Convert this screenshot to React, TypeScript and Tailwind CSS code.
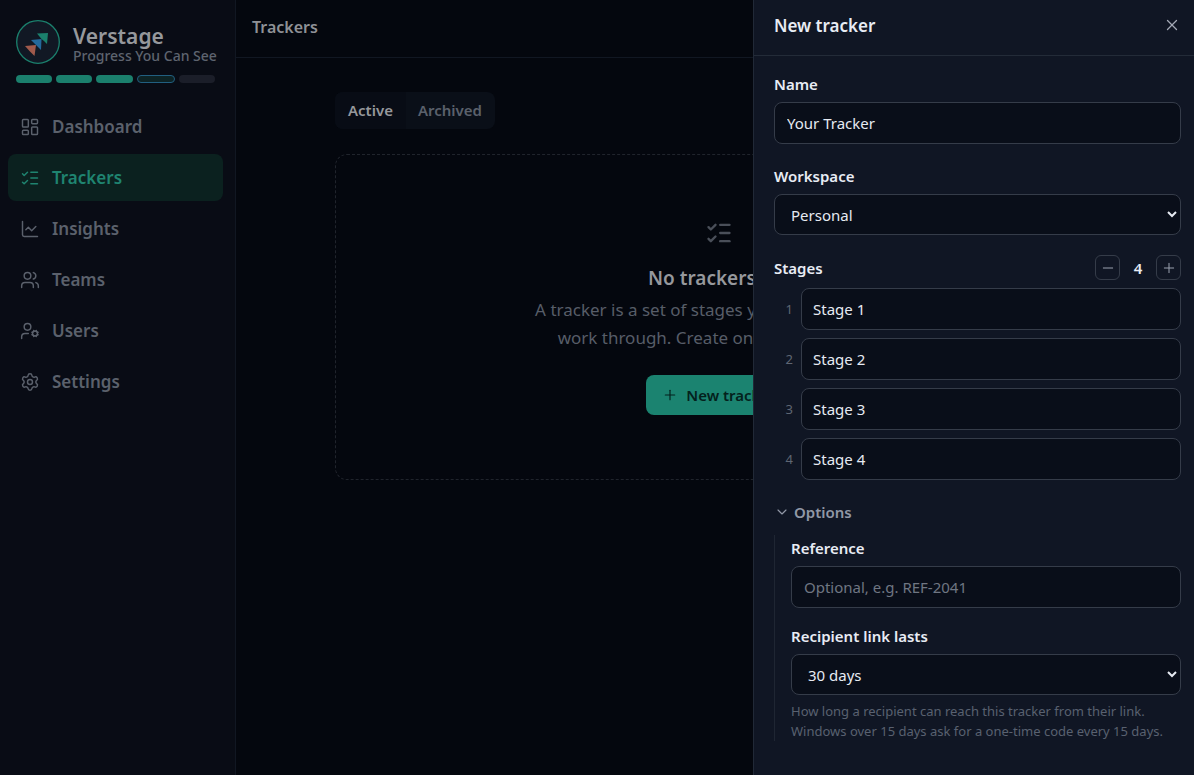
import { useState } from "react";
import {
  ChartLine,
  ChevronDown,
  LayoutDashboard,
  ListChecks,
  Minus,
  Plus,
  Settings,
  UserCog,
  Users,
  X,
} from "lucide-react";

const navItems = [
  { label: "Dashboard", icon: LayoutDashboard },
  { label: "Trackers", icon: ListChecks, active: true },
  { label: "Insights", icon: ChartLine },
  { label: "Teams", icon: Users },
  { label: "Users", icon: UserCog },
  { label: "Settings", icon: Settings },
];

const fieldClass =
  "block w-full rounded-lg border border-[#353c49] bg-[#090e19] text-[15px] text-[#e6eaf2] outline-none placeholder:text-[#6f7682]";
const labelClass = "block text-[15px] leading-5 font-semibold text-[#e8ecf4]";
const stepClass =
  "flex size-[25px] items-center justify-center rounded-md border border-[#353c49] text-[#9aa1af]";

function Logo() {
  return (
    <svg viewBox="0 0 44 44" className="size-11 shrink-0" aria-hidden="true">
      <circle cx="22" cy="22" r="21.3" fill="#111824" stroke="#1b806d" strokeWidth="1.3" />
      <path d="M21 13.5 32 13 31 24 28 21 25.500 19Z" fill="#1b806d" />
      <path d="M15 20 25.500 19 25 30 21.500 26.500Z" fill="#23699c" />
      <path d="M9 26 20 25 18.500 36 13.500 31Z" fill="#a05a4c" />
    </svg>
  );
}

function Sidebar() {
  return (
    <aside className="w-59 shrink-0 border-r border-[#111722] bg-[#090c15]">
      <div className="px-4 pt-5">
        <div className="flex items-center gap-[13px]">
          <Logo />
          <div className="pt-1 whitespace-nowrap">
            <div className="text-[21px] leading-6 font-semibold text-[#96989c]">Verstage</div>
            <div className="text-[14px] leading-4 font-medium text-[#5e646f]">Progress You Can See</div>
          </div>
        </div>
        <div className="mt-[11px] flex w-[199px] gap-1">
          <span className="h-2 flex-1 rounded-full bg-[#1b806d]" />
          <span className="h-2 flex-1 rounded-full bg-[#1b806d]" />
          <span className="h-2 flex-1 rounded-full bg-[#1b806d]" />
          <span className="h-2 flex-1 rounded-full border border-[#215f80] bg-[#0d2325]" />
          <span className="h-2 flex-1 rounded-full bg-[#1b1e29]" />
        </div>
      </div>
      <nav className="mt-5 flex flex-col gap-1 pr-3 pl-2">
        {navItems.map(({ label, icon: Icon, active }) => (
          <a
            key={label}
            href="#"
            className={
              active
                ? "flex h-[47px] items-center gap-3 rounded-lg bg-[#0b211f] px-3 text-[17px] font-semibold text-[#1f8470]"
                : "flex h-[47px] items-center gap-3 rounded-lg px-3 text-[17px] font-semibold text-[#5b616c]"
            }
          >
            <Icon size={20} strokeWidth={1.75} />
            {label}
          </a>
        ))}
      </nav>
    </aside>
  );
}

function TrackersPage() {
  return (
    <main className="min-w-0 flex-1 bg-[#04070e]">
      <header className="flex h-[58px] items-center border-b border-[#111722] px-4 pb-1">
        <h1 className="text-[16px] font-semibold text-[#8f9196]">Trackers</h1>
      </header>
      <div className="pl-2">
        <div className="mx-auto w-full max-w-3xl pt-[34px]">
          <div className="flex h-[37px] w-fit items-stretch rounded-lg bg-[#0a0f18] text-[15px] font-semibold">
            <button type="button" className="rounded-l-lg bg-[#080c15] px-[13px] text-[#96989c]">
              Active
            </button>
            <button type="button" className="pr-[13px] pl-3 text-[#5b616c]">
              Archived
            </button>
          </div>
          <section className="mt-[25px] flex h-[326px] flex-col items-center rounded-xl border border-dashed border-[#20242c] pt-16 text-center">
            <ListChecks size={28} strokeWidth={2} className="text-[#4a4f59]" />
            <h2 className="mt-[17px] text-[19px] leading-7 font-semibold text-[#96989c]">No trackers yet</h2>
            <p className="mt-1 text-[17px] leading-7 text-[#575d68]">
              A tracker is a set of stages your customers will
              <br />
              work through. Create one to get started.
            </p>
            <button
              type="button"
              className="mt-[23px] flex h-10 items-center gap-2 rounded-lg bg-[#1b8370] px-4 text-[15px] font-semibold text-[#04211c]"
            >
              <Plus size={16} strokeWidth={1.75} />
              New tracker
            </button>
          </section>
        </div>
      </div>
    </main>
  );
}

function NewTrackerPanel() {
  const [stages, setStages] = useState(["Stage 1", "Stage 2", "Stage 3", "Stage 4"]);
  const [name, setName] = useState("Your Tracker");

  return (
    <div
      role="dialog"
      aria-label="New tracker"
      className="fixed inset-y-0 right-0 w-[441px] overflow-hidden border-l border-[#212937] bg-[#101624]"
    >
      <div className="flex h-14 items-center justify-between border-b border-[#232b38] px-5 pb-1">
        <h2 className="text-[17px] font-semibold text-[#e8ecf4]">New tracker</h2>
        <button type="button" aria-label="Close" className="-mr-[7px] pb-px text-[#a3a9b5]">
          <X size={18} strokeWidth={1.75} />
        </button>
      </div>
      <form className="pt-[18px] pr-[13px] pl-5">
        <label htmlFor="name" className={labelClass}>Name</label>
        <input
          id="name"
          value={name}
          onChange={(e) => setName(e.target.value)}
          className={`${fieldClass} mt-2 h-[42px] px-3`}
        />

        <label htmlFor="workspace" className={`${labelClass} mt-[22px]`}>Workspace</label>
        <select id="workspace" className={`${fieldClass} mt-2 h-[41px] pl-3`}>
          <option>Personal</option>
        </select>

        <div className="mt-5 flex items-center justify-between">
          <span className={labelClass}>Stages</span>
          <div className="flex items-center">
            <button
              type="button"
              aria-label="Remove stage"
              className={stepClass}
              onClick={() => setStages(stages.slice(0, -1))}
            >
              <Minus size={16} strokeWidth={1.5} />
            </button>
            <span className="w-9 text-center text-[15px] leading-5 font-semibold text-[#e8ecf4]">{stages.length}</span>
            <button
              type="button"
              aria-label="Add stage"
              className={stepClass}
              onClick={() => setStages([...stages, `Stage ${stages.length + 1}`])}
            >
              <Plus size={16} strokeWidth={1.5} />
            </button>
          </div>
        </div>
        <ol className="mt-2 flex flex-col gap-2">
          {stages.map((stage, i) => (
            <li key={i} className="flex items-center gap-2">
              <span className="w-[19px] text-right text-[13px] leading-5 text-[#5f6673]">{i + 1}</span>
              <input
                aria-label={`Stage ${i + 1} name`}
                value={stage}
                onChange={(e) => setStages(stages.map((s, j) => (j === i ? e.target.value : s)))}
                className={`${fieldClass} h-[42px] flex-1 px-[11px]`}
              />
            </li>
          ))}
        </ol>

        <button type="button" className="mt-[22px] flex items-center gap-1 text-[15px] leading-5 font-semibold text-[#9198a6]">
          <ChevronDown size={16} strokeWidth={1.75} />
          Options
        </button>
        <div className="mt-[13px] border-l border-[#1f2633] pt-[3px] pl-4">
          <label htmlFor="reference" className={labelClass}>Reference</label>
          <input
            id="reference"
            placeholder="Optional, e.g. REF-2041"
            className={`${fieldClass} mt-2 h-[42px] px-3`}
          />
          <label htmlFor="lifetime" className={`${labelClass} mt-[18px]`}>Recipient link lasts</label>
          <select id="lifetime" className={`${fieldClass} mt-2 h-[41px] pl-3`}>
            <option>30 days</option>
          </select>
          <p className="mt-[6px] text-[13px] leading-5 whitespace-nowrap text-[#596170]">
            How long a recipient can reach this tracker from their link.
            <br />
            Windows over 15 days ask for a one-time code every 15 days.
          </p>
        </div>
      </form>
    </div>
  );
}

export default function App() {
  return (
    <div className="flex min-h-screen overflow-hidden bg-[#04070e] font-['Noto_Sans','Open_Sans',sans-serif]">
      <Sidebar />
      <TrackersPage />
      <NewTrackerPanel />
    </div>
  );
}
